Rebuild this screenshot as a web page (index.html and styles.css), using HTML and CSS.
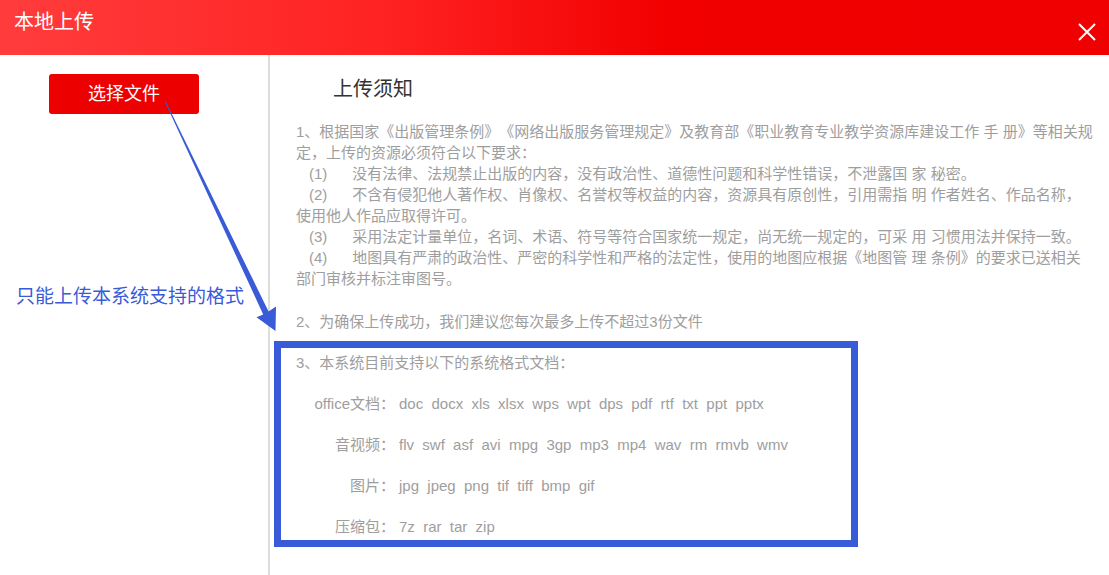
FILE: index.html
```html
<!DOCTYPE html>
<html lang="zh-CN">
<head>
<meta charset="utf-8">
<title>本地上传</title>
<link rel="stylesheet" href="styles.css">
</head>
<body>
<div class="dialog">
  <header class="dialog-header">
    <h1 class="dialog-title">本地上传</h1>
    <button class="close-btn" aria-label="关闭">
      <svg width="18" height="18" viewBox="0 0 18 18"><path d="M1 1 L17 17 M17 1 L1 17" stroke="#fff" stroke-width="2" fill="none"/></svg>
    </button>
  </header>
  <div class="dialog-body">
    <aside class="sidebar">
      <button class="pick-btn">选择文件</button>
      <p class="hint">只能上传本系统支持的格式</p>
    </aside>
    <main class="notice">
      <h2 class="notice-title">上传须知</h2>
      <p class="para">1、根据国家《出版管理条例》《网络出版服务管理规定》及教育部《职业教育专业教学资源库建设工作 手 册》等相关规<br>定，上传的资源必须符合以下要求：<br><span class="num">(1)</span>没有法律、法规禁止出版的内容，没有政治性、道德性问题和科学性错误，不泄露国 家 秘密。<br><span class="num">(2)</span>不含有侵犯他人著作权、肖像权、名誉权等权益的内容，资源具有原创性，引用需指 明 作者姓名、作品名称，<br>使用他人作品应取得许可。<br><span class="num">(3)</span>采用法定计量单位，名词、术语、符号等符合国家统一规定，尚无统一规定的，可采 用 习惯用法并保持一致。<br><span class="num">(4)</span>地图具有严肃的政治性、严密的科学性和严格的法定性，使用的地图应根据《地图管 理 条例》的要求已送相关<br>部门审核并标注审图号。</p>
      <p class="para para-2">2、为确保上传成功，我们建议您每次最多上传不超过3份文件</p>
      <p class="para para-3">3、本系统目前支持以下的系统格式文档：</p>
      <dl class="formats">
        <div class="fmt-row"><dt>office文档：</dt><dd><span>doc</span><span>docx</span><span>xls</span><span>xlsx</span><span>wps</span><span>wpt</span><span>dps</span><span>pdf</span><span>rtf</span><span>txt</span><span>ppt</span><span>pptx</span></dd></div>
        <div class="fmt-row"><dt>音视频：</dt><dd><span>flv</span><span>swf</span><span>asf</span><span>avi</span><span>mpg</span><span>3gp</span><span>mp3</span><span>mp4</span><span>wav</span><span>rm</span><span>rmvb</span><span>wmv</span></dd></div>
        <div class="fmt-row"><dt>图片：</dt><dd><span>jpg</span><span>jpeg</span><span>png</span><span>tif</span><span>tiff</span><span>bmp</span><span>gif</span></dd></div>
        <div class="fmt-row"><dt>压缩包：</dt><dd><span>7z</span><span>rar</span><span>tar</span><span>zip</span></dd></div>
      </dl>
    </main>
  </div>
</div>
<div class="mark-box"></div>
<svg class="mark-arrow" width="1109" height="575" viewBox="0 0 1109 575">
  <polygon points="165,102 166,102 268.6,311.6 276,306.5 275.5,331 256.5,317.2 263.2,314.4" fill="#3a5bd7"/>
</svg>
</body>
</html>
```
FILE: styles.css
```css
* { box-sizing: border-box; }
html, body { margin: 0; padding: 0; }
body {
  width: 1109px;
  height: 575px;
  overflow: hidden;
  position: relative;
  background: #fff;
  font-family: "Liberation Sans", "Noto Sans CJK SC", sans-serif;
  text-spacing-trim: space-all;
}
.dialog { display: flex; flex-direction: column; height: 575px; }
.dialog-header {
  height: 55px;
  flex: none;
  display: flex;
  justify-content: space-between;
  align-items: flex-start;
  padding: 0 13px 0 14px;
  background: linear-gradient(to right, #ff3c3c 0%, #ff2222 35%, #f20000 60%, #f00000 100%);
}
.dialog-title {
  margin: 0;
  padding-top: 9px;
  font-size: 20px;
  line-height: 26px;
  font-weight: normal;
  color: #fff;
}
.close-btn {
  margin-top: 23px;
  padding: 0;
  border: 0;
  background: none;
  width: 18px;
  height: 18px;
  display: block;
}
.close-btn svg { display: block; }
.dialog-body { flex: 1; display: flex; }
.sidebar {
  width: 270px;
  flex: none;
  border-right: 2px solid #dcdcdc;
  padding-top: 19px;
}
.pick-btn {
  display: block;
  margin-left: 49px;
  width: 150px;
  height: 40px;
  border: 0;
  border-radius: 3px;
  background: #ec0000;
  color: #fff;
  font-family: "Liberation Sans", "Noto Sans CJK SC", sans-serif;
  font-size: 18px;
  line-height: 40px;
  padding: 0 0 2px;
}
.hint {
  margin: 170px 0 0 16px;
  font-size: 19px;
  line-height: 26px;
  color: #3a5bd7;
  white-space: nowrap;
}
.notice {
  flex: 1;
  padding: 19px 0 0 26px;
  color: #9e9e9e;
  font-size: 15px;
  line-height: 21px;
}
.notice-title {
  margin: 0 0 17px 37px;
  font-size: 20px;
  line-height: 30px;
  font-weight: normal;
  color: #333;
}
.para { margin: 0; white-space: nowrap; }
.num { display: inline-block; margin-left: 13px; margin-right: 25px; }
.para-2 { margin-top: 22px; }
.para-3 { margin-top: 20px; }
.formats { margin: 0; }
.fmt-row { display: flex; margin-top: 20px; }
.fmt-row dt { width: 99px; text-align: right; }
.fmt-row dd { margin: 0 0 0 4px; display: flex; column-gap: 8.3px; }
.mark-box {
  position: absolute;
  left: 274px;
  top: 341px;
  width: 584px;
  height: 206px;
  border: 7px solid #3a5bd7;
}
.mark-arrow {
  position: absolute;
  left: 0;
  top: 0;
  pointer-events: none;
}
```
